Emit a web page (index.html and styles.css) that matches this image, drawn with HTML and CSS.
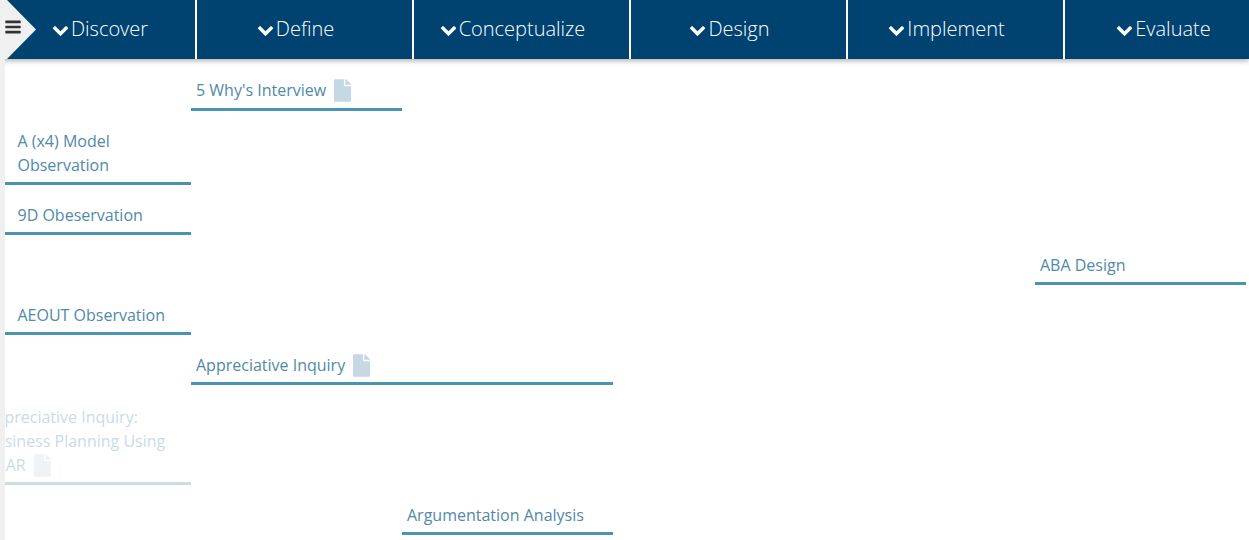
FILE: index.html
```html
<!DOCTYPE html>
<html lang="en">
<head>
<meta charset="utf-8">
<title>Methods</title>
<link rel="stylesheet" href="styles.css">
</head>
<body>
<svg class="sprites" width="0" height="0" aria-hidden="true">
  <symbol id="i-chev" viewBox="0 0 1792 1792"><path d="M1683 808l-742 741q-19 19-45 19t-45-19l-742-741q-19-19-19-45.5t19-45.5l166-165q19-19 45-19t45 19l531 531 531-531q19-19 45-19t45 19l166 165q19 19 19 45.5t-19 45.5z"/></symbol>
  <symbol id="i-file" viewBox="0 0 384 512"><path d="M224 136V0H24C10.7 0 0 10.7 0 24v464c0 13.3 10.7 24 24 24h336c13.3 0 24-10.7 24-24V160H248c-13.2 0-24-10.8-24-24zm160-14.1v6.1H256V0h6.1c6.4 0 12.5 2.5 17 7l97.9 98c4.5 4.5 7 10.6 7 16.9z"/></symbol>
  <symbol id="i-bars" viewBox="0 0 1792 1792"><path d="M1664 1344v128q0 26-19 45t-45 19h-1408q-26 0-45-19t-19-45v-128q0-26 19-45t45-19h1408q26 0 45 19t19 45zm0-512v128q0 26-19 45t-45 19h-1408q-26 0-45-19t-19-45v-128q0-26 19-45t45-19h1408q26 0 45 19t19 45zm0-512v128q0 26-19 45t-45 19h-1408q-26 0-45-19t-19-45v-128q0-26 19-45t45-19h1408q26 0 45 19t19 45z"/></symbol>
</svg>
<header class="topbar">
  <button class="menu-tab" type="button" aria-label="Menu"><svg class="menu-icon"><use href="#i-bars"/></svg></button>
  <nav class="phases">
    <a class="phase phase-first"><svg class="chev"><use href="#i-chev"/></svg>Discover</a>
    <a class="phase"><svg class="chev"><use href="#i-chev"/></svg>Define</a>
    <a class="phase"><svg class="chev"><use href="#i-chev"/></svg>Conceptualize</a>
    <a class="phase"><svg class="chev"><use href="#i-chev"/></svg>Design</a>
    <a class="phase"><svg class="chev"><use href="#i-chev"/></svg>Implement</a>
    <a class="phase"><svg class="chev"><use href="#i-chev"/></svg>Evaluate</a>
  </nav>
</header>
<main class="board">
  <div class="row row-first"><a class="item c2">5 Why's Interview<svg class="doc"><use href="#i-file"/></svg></a></div>
  <div class="row"><a class="item c1">A (x4) Model Observation</a></div>
  <div class="row"><a class="item c1">9D Obeservation</a></div>
  <div class="row"><a class="item c6">ABA Design</a></div>
  <div class="row"><a class="item c1">AEOUT Observation</a></div>
  <div class="row"><a class="item c2 span2">Appreciative Inquiry<svg class="doc"><use href="#i-file"/></svg></a></div>
  <div class="row"><a class="item c1 leaving"><span class="slide">Appreciative Inquiry: Business Planning Using SOAR<svg class="doc"><use href="#i-file"/></svg></span></a></div>
  <div class="row"><a class="item c3">Argumentation Analysis</a></div>
</main>
</body>
</html>
```
FILE: styles.css
```css
* { box-sizing: border-box; }
html, body { margin: 0; height: 100%; overflow: hidden; }
body {
  font-family: "Open Sans", sans-serif;
  background: #fff;
  border-left: 5px solid #f0f0f0;
}
.sprites { position: absolute; }
.topbar {
  position: relative;
  height: 59px;
  margin-left: -5px;
  background: #004270;
  box-shadow: 0 2px 5px rgba(0, 0, 0, .3);
}
.menu-tab {
  position: absolute;
  left: 0;
  top: 0;
  width: 37px;
  height: 59px;
  padding: 0;
  border: 0;
  background: #f0f0f0;
  clip-path: polygon(0 0, 7px 0, 36px 29.5px, 7px 59px, 0 59px);
}
.menu-icon { position: absolute; left: 4px; top: 18px; width: 18px; height: 18px; fill: #333; }
.phases { display: grid; grid-template-columns: 197px repeat(5, 217px); height: 59px; }
.phase {
  display: flex;
  align-items: center;
  justify-content: center;
  padding: 0 18px 2px 0;
  border-right: 2px solid #fff;
  color: #fff;
  font-size: 20px;
  font-weight: 300;
}
.phase:last-child { border-right: 0; padding-right: 20px; }
.phase-first { padding-left: 5px; padding-right: 0; }
.chev { width: 17px; height: 17px; margin: 2px 2px 0 0; fill: #fff; }
.board { display: flex; flex-direction: column; padding-top: 1px; }
.row {
  display: grid;
  grid-template-columns: 186px repeat(5, 211px);
}
.item {
  display: block;
  padding: 18px 12.5px 5px;
  border-bottom: 3px solid #4b94b1;
  color: #4f8aa8;
  font-size: 16px;
  line-height: 24px;
  overflow: hidden;
}
.row-first .item { padding-bottom: 6px; }
.c1 { grid-column: 1; }
.c2 { grid-column: 2; padding-left: 5px; }
.c3 { grid-column: 3; padding-left: 5px; }
.c6 { grid-column: 6; padding-left: 5px; }
.span2 { grid-column: 2 / span 2; }
.doc { width: 17px; height: 23px; margin: 1px 0 0 8px; vertical-align: top; fill: #c5d8e3; }
.leaving { opacity: .3; padding-top: 20px; }
.slide { display: block; width: 186px; margin-left: -33px; }
```
